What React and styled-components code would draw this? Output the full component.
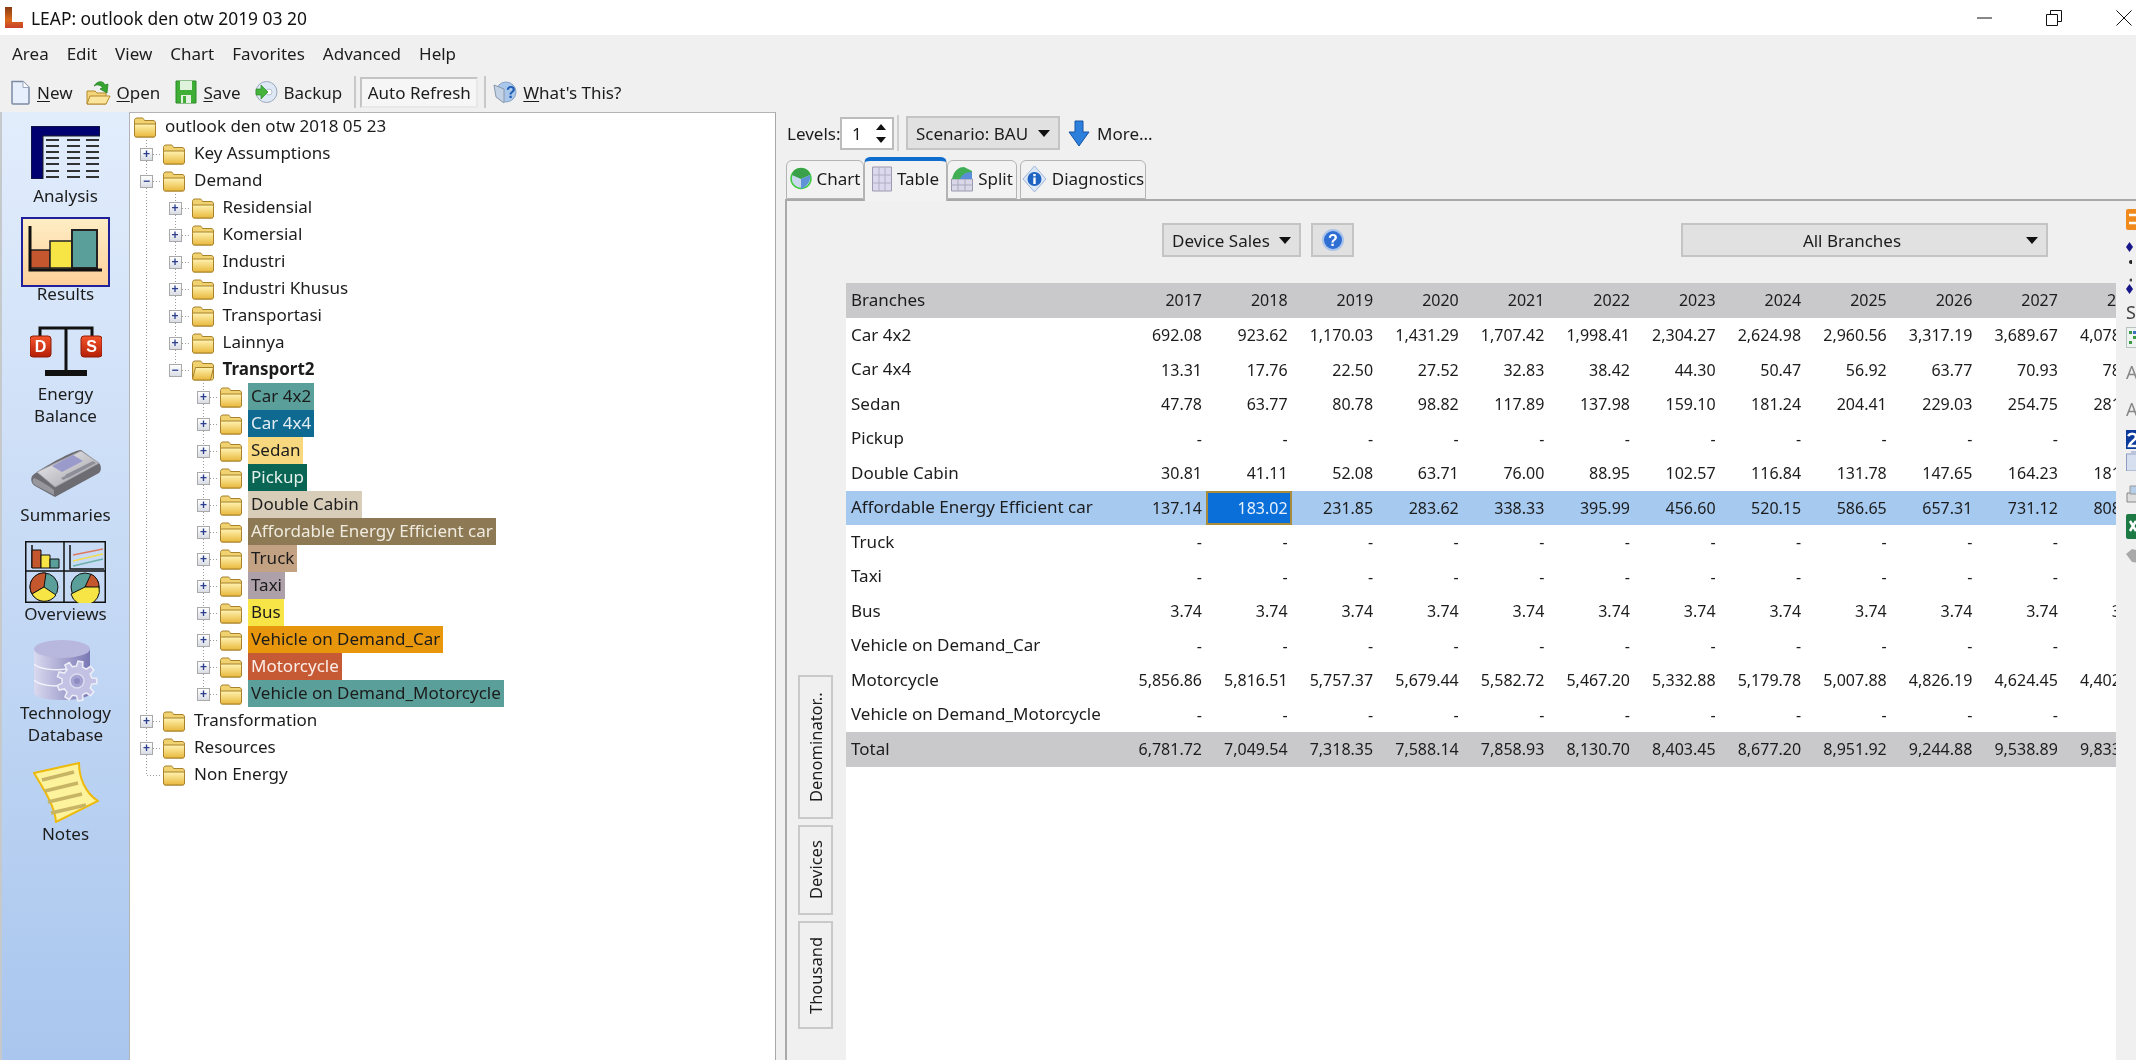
import React from "react";
import styled, { createGlobalStyle } from "styled-components";

const GlobalStyle = createGlobalStyle`
  html, body {
    margin: 0;
    padding: 0;
    background: #f0f0f0;
    overflow: hidden;
  }
  #root {
    width: 2136px;
    height: 1060px;
  }
`;

// Window chrome
const Page = styled.div`
  width: 2136px;
  height: 1060px;
  display: flex;
  flex-direction: column;
  overflow: hidden;
  background: #f0f0f0;
  color: #1c1c1c;
  font-family: "Noto Sans", "Open Sans", sans-serif;
  font-size: 17px;
  filter: blur(0.35px);
`;

const TitleBar = styled.header`
  height: 35px;
  flex: none;
  background: #fff;
  display: flex;
  align-items: center;
  padding-left: 5px;
`;

const TitleText = styled.span`
  margin-left: 8px;
  font-size: 17.4px;
  color: #111;
`;

const WindowButtons = styled.div`
  margin-left: auto;
  display: flex;
  align-items: center;
  gap: 54px;
  padding-right: 4px;
`;

const MenuBar = styled.nav`
  height: 37px;
  flex: none;
  display: flex;
  align-items: center;
  gap: 18px;
  padding-left: 12px;
`;

const MenuItem = styled.span`
  font-size: 17px;
`;

const ToolBar = styled.div`
  height: 40px;
  flex: none;
  display: flex;
  align-items: center;
  padding-left: 10px;
`;

const ToolButton = styled.span`
  display: flex;
  align-items: center;
  gap: 6px;
  margin-right: ${(p) => p.$mr}px;
  u {
    text-underline-offset: 2px;
  }
`;

const ToolSep = styled.span`
  width: 2px;
  height: 32px;
  background: #c8c8c8;
  margin-right: ${(p) => p.$mr}px;
`;

const AutoRefresh = styled.span`
  width: 118px;
  height: 31px;
  box-sizing: border-box;
  border: 2px solid #c4c4c4;
  border-bottom-color: #e8e8e8;
  border-right-color: #e8e8e8;
  background: #f6f6f6;
  display: flex;
  align-items: center;
  justify-content: center;
  margin-right: 6px;
  white-space: nowrap;
`;

const Main = styled.main`
  flex: 1;
  display: flex;
  min-height: 0;
`;

// Left icon rail
const Sidebar = styled.aside`
  width: 129px;
  flex: none;
  box-sizing: border-box;
  padding-top: 14px;
  background: linear-gradient(180deg, #e2edfc 0%, #a9c6ee 100%);
  border-left: 2px solid #c6c9cc;
  display: flex;
  flex-direction: column;
  align-items: center;
`;

const NavItem = styled.div`
  display: flex;
  flex-direction: column;
  align-items: center;
  margin-top: ${(p) => p.$mt || 0}px;
  width: 125px;
`;

const NavIcon = styled.div`
  height: ${(p) => p.$h}px;
  display: flex;
  align-items: center;
  justify-content: center;
  margin-bottom: ${(p) => p.$gap || 0}px;
`;

const ActiveBox = styled.div`
  width: 89px;
  height: 70px;
  box-sizing: border-box;
  border: 2px solid #20209a;
  background: linear-gradient(180deg, #ffedc4 0%, #fdd09a 100%);
  display: flex;
  align-items: center;
  justify-content: center;
  margin-bottom: -4px;
`;

const NavLabel = styled.div`
  line-height: 22px;
  font-size: 17px;
  text-align: center;
  position: relative;
`;

// Tree
const TreePanel = styled.section`
  width: 647px;
  flex: none;
  box-sizing: border-box;
  background: #fff;
  border-top: 1px solid #b4b4b4;
  border-left: 1px solid #b4b4b4;
  border-right: 1px solid #a8a8a8;
  padding-left: 3px;
`;

const TreeRow = styled.div`
  height: 27px;
  display: flex;
  align-items: center;
`;

const IndentCell = styled.span`
  width: 28.5px;
  height: 27px;
  flex: none;
  background: ${(p) =>
    p.$line
      ? "repeating-linear-gradient(180deg, #9a9a9a 0 1px, transparent 1px 3px) 13px 0 / 1px 100% no-repeat"
      : "none"};
`;

const ExpanderCell = styled.span`
  width: 29px;
  height: 27px;
  flex: none;
  display: flex;
  align-items: center;
  position: relative;
  &::before {
    content: "";
    position: absolute;
    left: 13px;
    top: 0;
    width: 1px;
    height: ${(p) => (p.$last ? "50%" : "100%")};
    background: repeating-linear-gradient(180deg, #9a9a9a 0 1px, transparent 1px 3px);
  }
  &::after {
    content: "";
    position: absolute;
    left: 14px;
    right: 2px;
    top: 14px;
    height: 1px;
    background: repeating-linear-gradient(90deg, #9a9a9a 0 1px, transparent 1px 3px);
  }
`;

const ExpandBox = styled.span`
  position: relative;
  z-index: 1;
  margin-left: 7px;
  margin-top: 1px;
  width: 13px;
  height: 13px;
  box-sizing: border-box;
  border: 1px solid #a9a9a9;
  background: linear-gradient(180deg, #fff, #d9dde4);
  display: flex;
  align-items: center;
  justify-content: center;
  color: #2c3f8e;
  font: 700 12px/1 "Liberation Sans", sans-serif;
`;

const TreeLabel = styled.span`
  margin-left: 5px;
  padding: 0 3px;
  height: 27px;
  line-height: 26px;
  white-space: nowrap;
  background: ${(p) => p.$bg || "transparent"};
  color: ${(p) => p.$fg || "#1c1c1c"};
  font-weight: ${(p) => (p.$bold ? 700 : 400)};
`;

// Right side
const RightPanel = styled.section`
  flex: 1;
  min-width: 0;
  display: flex;
  flex-direction: column;
  padding-left: 9px;
`;

const LevelsRow = styled.div`
  height: 45px;
  flex: none;
  display: flex;
  align-items: center;
  padding: 0 0 3px;
  box-sizing: border-box;
`;

const LevelsLabel = styled.span`
  margin-left: 2px;
  width: 53px;
`;

const SpinBox = styled.span`
  width: 54px;
  height: 33px;
  box-sizing: border-box;
  border: 2px solid #bcbcbc;
  background: #fff;
  display: flex;
  align-items: center;
  justify-content: space-between;
  padding: 0 6px 0 10px;
`;

const SpinArrows = styled.span`
  display: flex;
  flex-direction: column;
  gap: 7px;
`;

const RowSep = styled.span`
  width: 2px;
  height: 36px;
  margin: 0 7px 0 3px;
  background: #cfcfcf;
`;

const DropButton = styled.button`
  width: ${(p) => p.$w}px;
  height: 34px;
  box-sizing: border-box;
  border: 2px solid #c4c4c4;
  background: #e1e1e1;
  display: flex;
  align-items: center;
  justify-content: ${(p) => (p.$center ? "center" : "space-between")};
  padding: 0 8px;
  position: relative;
  font: inherit;
  color: inherit;
  white-space: nowrap;
`;

const Caret = styled.span`
  width: 0;
  height: 0;
  border-left: 6px solid transparent;
  border-right: 6px solid transparent;
  border-top: 7px solid #111;
`;

const SideCaret = styled(Caret)`
  position: absolute;
  right: 8px;
  top: 12px;
`;

const MoreLink = styled.span`
  display: flex;
  align-items: center;
  gap: 7px;
  margin-left: 8px;
`;

const TabStrip = styled.div`
  height: 42px;
  flex: none;
  display: flex;
  align-items: flex-end;
  padding-left: 1px;
  position: relative;
  z-index: 1;
`;

const Tab = styled.div`
  width: ${(p) => p.$w}px;
  height: ${(p) => (p.$active ? 44 : 39)}px;
  margin-left: ${(p) => p.$ml || 0}px;
  margin-bottom: ${(p) => (p.$active ? -2 : 0)}px;
  padding-bottom: ${(p) => (p.$active ? 5 : 2)}px;
  box-sizing: border-box;
  border: 1px solid #b4b4b4;
  border-bottom: ${(p) => (p.$active ? "none" : "1px solid #b4b4b4")};
  border-top: ${(p) => (p.$active ? "4px solid #0f6dce" : "1px solid #b4b4b4")};
  border-radius: 6px 6px 0 0;
  background: #f2f2f2;
  display: flex;
  align-items: center;
  justify-content: center;
  gap: 5px;
`;

const TabPanel = styled.div`
  flex: 1;
  min-height: 0;
  display: flex;
  border-top: 2px solid #a9a9a9;
  border-left: 2px solid #a9a9a9;
`;

const PanelBody = styled.div`
  width: 1329px;
  flex: none;
  display: flex;
  flex-direction: column;
`;

const FilterRow = styled.div`
  height: 82px;
  flex: none;
  box-sizing: border-box;
  padding: 22px 0 0 375px;
  display: flex;
  align-items: flex-start;
`;

const HelpButton = styled.span`
  width: 43px;
  height: 34px;
  box-sizing: border-box;
  margin-left: 10px;
  border: 2px solid #c4c4c4;
  background: #e1e1e1;
  display: flex;
  align-items: center;
  justify-content: center;
`;

const BranchSelect = styled(DropButton)`
  margin-left: 327px;
  padding-right: 33px;
`;

const TableArea = styled.div`
  flex: 1;
  min-height: 0;
  display: flex;
`;

const SideTabs = styled.div`
  width: 59px;
  flex: none;
  box-sizing: border-box;
  display: flex;
  flex-direction: column;
  justify-content: flex-end;
  padding: 0 0 31px 11px;
  gap: 6px;
`;

const SideTab = styled.div`
  width: 35px;
  height: ${(p) => p.$h}px;
  box-sizing: border-box;
  border: 2px solid #c9c9c9;
  writing-mode: vertical-rl;
  transform: rotate(180deg);
  display: flex;
  align-items: center;
  justify-content: center;
  font-size: 16.5px;
`;

const GridWrap = styled.div`
  flex: 1;
  min-width: 0;
  background: #fff;
`;

// the last year column runs off the panel in the real window, so it is cut at 54px
const GridRow = styled.div`
  display: grid;
  grid-template-columns: 274.4px repeat(11, 85.6px) 54px;
  height: ${(p) => (p.$head ? 35 : 34.5)}px;
  align-items: center;
  background: ${(p) => (p.$head ? "#c9c9cb" : p.$sel ? "#a6c9f0" : "#fff")};
`;

const NameCell = styled.div`
  padding-left: 5px;
  white-space: nowrap;
  margin-top: -2px;
`;

const NumCell = styled.div`
  text-align: right;
  padding-right: 4px;
  height: 100%;
  line-height: 34px;
  box-sizing: border-box;
  font-size: 16px;
  ${(p) =>
    p.$picked &&
    `
    background: #0a6fd8;
    color: #e8f2ff;
    border: 2px solid #a98b3e;
    padding-right: 2px;
    line-height: 30px;
  `}
`;

const CutCell = styled.div`
  height: 100%;
  line-height: 34px;
  font-size: 16px;
  overflow: hidden;
  white-space: nowrap;
`;

const CutValue = styled.span`
  display: inline-block;
  width: 85.6px;
  padding-right: 4px;
  box-sizing: border-box;
  text-align: right;
`;

const IconStrip = styled.div`
  width: 20px;
  flex: none;
  box-sizing: border-box;
  padding-left: 10px;
  overflow: hidden;
  display: flex;
  flex-direction: column;
  align-items: flex-start;
  white-space: nowrap;
`;

const StripIcon = styled.div`
  margin-top: ${(p) => p.$mt}px;
  height: ${(p) => p.$h}px;
  line-height: ${(p) => p.$h}px;
  color: ${(p) => p.$fg || "#444"};
  font-size: 18px;
`;

// Icons
const Folder = ({ open }) => (
  <svg width="24" height="22" viewBox="0 0 24 22">
    <defs>
      <linearGradient id="folderFill" x1="0" y1="0" x2="0" y2="1">
        <stop offset="0" stopColor="#fff3b2" />
        <stop offset="1" stopColor="#e9b83c" />
      </linearGradient>
    </defs>
    <path d="M1.5 19V4.5C1.5 3 2.5 2 4 2h5c1 0 1.6.6 2 1.5l.5 1H20c1.5 0 2.5 1 2.5 2.5V19c0 1.2-.8 2-2 2h-17c-1.2 0-2-.8-2-2z" fill="#f1d271" stroke="#a8812b" />
    {open ? (
      <path d="M1.5 20l3-11.5h18l-3 12.5H3z" fill="url(#folderFill)" stroke="#a8812b" />
    ) : (
      <path d="M1.5 19V9.5C1.5 8.5 2.3 8 3 8h18c1 0 1.5.7 1.5 1.5V19c0 1.2-.8 2-2 2h-17c-1.2 0-2-.8-2-2z" fill="url(#folderFill)" stroke="#a8812b" />
    )}
  </svg>
);

const LeapLogo = () => (
  <svg width="18" height="21" viewBox="0 0 18 21">
    <defs>
      <linearGradient id="leapFill" x1="0" y1="0" x2="0" y2="1">
        <stop offset="0" stopColor="#8a3b12" />
        <stop offset=".6" stopColor="#d9691a" />
        <stop offset="1" stopColor="#c8402a" />
      </linearGradient>
    </defs>
    <path d="M0 0h7v15h11v6H0z" fill="url(#leapFill)" />
  </svg>
);

const NewDocIcon = () => (
  <svg width="21" height="25" viewBox="0 0 21 25">
    <path d="M2 1.5h11l6 6V23a1 1 0 0 1-1 1H3a1 1 0 0 1-1-1z" fill="#e6effb" stroke="#7d8aa5" strokeWidth="1.5" />
    <path d="M13 1.5V7.5h6" fill="#fff" stroke="#9aa6bd" />
  </svg>
);

const OpenIcon = () => (
  <svg width="25" height="27" viewBox="0 0 25 27">
    <path d="M1 25V12h8l2 2h9v11z" fill="#f4d47a" stroke="#b48a2b" />
    <path d="M1 25l3-8h20l-4 8z" fill="#fbe59c" stroke="#b48a2b" />
    <path d="M8 7c3-5 9-6 11-1l3-1-1 9-7-4 2.5-1.5C15 6 11 5 8 7z" fill="#35a52f" stroke="#1f7a1d" strokeWidth=".7" />
  </svg>
);

const SaveIcon = () => (
  <svg width="22" height="24" viewBox="0 0 22 24">
    <path d="M1 1h20v22H1z" fill="#3eae35" stroke="#2a8a26" />
    <path d="M5 1h12v9H5z" fill="#dff3dc" />
    <path d="M6 15h10v8H6z" fill="#e4efe2" />
    <path d="M8 16h3v7H8z" fill="#3eae35" />
  </svg>
);

const BackupIcon = () => (
  <svg width="23" height="24" viewBox="0 0 23 24">
    <circle cx="11.5" cy="12" r="10.5" fill="#dfe9f5" stroke="#9aa8bc" />
    <circle cx="14" cy="12" r="3" fill="#fff" stroke="#b5bfcc" />
    <path d="M1 9h5V5l7 7-7 7v-4H1z" fill="#46b43a" stroke="#2b8a28" strokeWidth=".7" />
  </svg>
);

const WhatsThisIcon = () => (
  <svg width="24" height="26" viewBox="0 0 24 26">
    <circle cx="13" cy="13" r="10" fill="#a9c7ea" stroke="#8ba3c4" />
    <path d="M1 6l10 4v14L3 18z" fill="#c3d2e4" stroke="#8a98ac" />
    <text x="13" y="19" fontFamily="Liberation Sans" fontWeight="700" fontSize="16" fill="#1d5db5">?</text>
  </svg>
);

const HelpIcon = () => (
  <svg width="22" height="24" viewBox="0 0 22 24">
    <circle cx="11" cy="12" r="10" fill="#2f6ed3" stroke="#aac4ea" strokeWidth="2" />
    <text x="11" y="18" textAnchor="middle" fontFamily="Liberation Sans" fontWeight="700" fontSize="16" fill="#fff">?</text>
  </svg>
);

const DownArrow = () => (
  <svg width="22" height="27" viewBox="0 0 22 27">
    <path d="M7 1h8v11h6L11 26 1 12h6z" fill="#2d7fdc" stroke="#1655a8" />
  </svg>
);

const PieTabIcon = () => (
  <svg width="22" height="25" viewBox="0 0 22 25">
    <circle cx="11" cy="12.5" r="10" fill="#c9d8ee" stroke="#3fcb3f" strokeWidth="1.5" />
    <path d="M2 9c1-5 5-7 9-7s8 2 9 7l-9 4z" fill="#3aa04a" />
    <path d="M11 13l9-4c1 5-2 11-9 14z" fill="#5f93d8" />
  </svg>
);

const GridTabIcon = () => (
  <svg width="20" height="28" viewBox="0 0 20 28">
    <path d="M.5 2h19v24H.5z" fill="#dcd8ee" stroke="#9c9aae" />
    <path d="M7 2v24M13 2v24M.5 10h19M.5 18h19" stroke="#b2afc2" />
  </svg>
);

const SplitTabIcon = () => (
  <svg width="22" height="26" viewBox="0 0 22 26">
    <path d="M.5 13h21v12H.5z" fill="#d8d8e8" stroke="#9c9aae" />
    <path d="M7 13v12M14 13v12M.5 19h21" stroke="#a9a9bc" />
    <path d="M1 13C3 4 8 1 13 1l8 4v8z" fill="#3fae55" />
    <path d="M9 13c2-4 5-7 12-7v7z" fill="#5a8fd8" />
  </svg>
);

const InfoTabIcon = () => (
  <svg width="25" height="28" viewBox="0 0 25 28">
    <path d="M12.5 1L24 14 12.5 27 1 14z" fill="#dbe7f6" stroke="#9eb5d6" />
    <circle cx="12.5" cy="14" r="7" fill="#1f63c3" />
    <path d="M11.3 12.5h2.4V19h-2.4zM11.3 9h2.4v2.2h-2.4z" fill="#fff" />
  </svg>
);

const AnalysisIcon = () => (
  <svg width="69" height="53" viewBox="0 0 69 53">
    <path d="M0 0h69v10H12v43H0z" fill="#000070" stroke="#222" />
    {[14, 20, 26, 32, 38, 45, 51].map((y) => (
      <path key={y} d="M15 0h13M36 0h13M55 0h13" transform={`translate(0 ${y})`} stroke="#333" strokeWidth="1.8" />
    ))}
  </svg>
);

const ResultsIcon = () => (
  <svg width="76" height="52" viewBox="0 0 76 52">
    <path d="M2 42h20V24H2z" fill="#c5572f" stroke="#222" strokeWidth="1.5" />
    <path d="M22 42h22V15H22z" fill="#f6e545" stroke="#222" strokeWidth="1.5" />
    <path d="M44 42h25V4H44z" fill="#5a9f99" stroke="#222" strokeWidth="2" />
    <path d="M2 0v44h72" fill="none" stroke="#111" strokeWidth="3" />
  </svg>
);

const BalanceIcon = () => (
  <svg width="72" height="50" viewBox="0 0 72 50">
    <defs>
      <linearGradient id="blockFill" x1="0" y1="0" x2="0" y2="1">
        <stop offset="0" stopColor="#f4552a" />
        <stop offset="1" stopColor="#b51f08" />
      </linearGradient>
    </defs>
    <path d="M10 12V2h52v10M36 2v44" fill="none" stroke="#111" strokeWidth="3" />
    <path d="M15 44h42v6H15z" fill="#111" />
    <rect x="0" y="10" width="21" height="21" rx="3" fill="url(#blockFill)" stroke="#8f1c08" />
    <rect x="51" y="10" width="21" height="21" rx="3" fill="url(#blockFill)" stroke="#8f1c08" />
    <text x="10.5" y="26" textAnchor="middle" fontFamily="Liberation Sans" fontWeight="700" fontSize="16" fill="#fff">D</text>
    <text x="61.5" y="26" textAnchor="middle" fontFamily="Liberation Sans" fontWeight="700" fontSize="16" fill="#fff">S</text>
  </svg>
);

const SummariesIcon = () => (
  <svg width="70" height="48" viewBox="0 0 70 48">
    <defs>
      <linearGradient id="paperFill" x1="0" y1="0" x2="1" y2="1">
        <stop offset="0" stopColor="#f4f4f6" />
        <stop offset="1" stopColor="#9a9aa2" />
      </linearGradient>
    </defs>
    <path d="M2 26c-3 3-2 9 2 11l20 11 44-24c3-3 2-8 0-10L50 1C45 0 12 18 2 26z" fill="#6c6c72" />
    <path d="M6 23L50 2l18 12-44 24z" fill="url(#paperFill)" stroke="#a4a4aa" />
    <path d="M21 17L42 6l10 6-21 11z" fill="#9a9acb" />
    <path d="M34 26l28-14 3 2-28 15zM30 29l12-6 2 2-12 6z" fill="#8e8e98" />
    <path d="M3 29c4 1 15 8 20 12v5L4 36c-3-2-3-5-1-7z" fill="#96969c" />
  </svg>
);

const OverviewsIcon = () => (
  <svg width="81" height="62" viewBox="0 0 81 62">
    <rect x=".75" y=".75" width="79.5" height="60.5" fill="none" stroke="#111" strokeWidth="1.5" />
    <path d="M39 0v62M0 30h81" stroke="#111" strokeWidth="1.5" />
    <path d="M7 27V4" stroke="#111" strokeWidth="1.5" />
    <path d="M7 9h9v18H7z" fill="#c5572f" stroke="#111" />
    <path d="M16 14h9v13h-9z" fill="#f6e545" stroke="#111" />
    <path d="M25 18h9v9h-9z" fill="#5a9f99" stroke="#111" />
    <path d="M45 4v24h34" fill="none" stroke="#111" strokeWidth="1.5" />
    <path d="M48 14l30-6" stroke="#dc7a60" strokeWidth="1.5" />
    <path d="M48 20l30-7" stroke="#f0dc50" strokeWidth="1.5" />
    <path d="M48 25l30-7" stroke="#6dafa9" strokeWidth="1.5" />
    <circle cx="19" cy="46" r="14" fill="#5a9f99" stroke="#111" />
    <path d="M19 46L21 32A14 14 0 0 0 5 46 14 14 0 0 0 7 53z" fill="#c5572f" stroke="#111" />
    <path d="M19 46L7 53A14 14 0 0 0 31 54z" fill="#f6e545" stroke="#111" />
    <circle cx="60" cy="46" r="14" fill="#5a9f99" stroke="#111" />
    <path d="M60 46L66 33A14 14 0 0 1 74 47z" fill="#c5572f" stroke="#111" />
    <path d="M60 46H74A14 14 0 0 1 46 53z" fill="#f6e545" stroke="#111" />
  </svg>
);

// gear outline around (cx, cy), built from its teeth
function gearPath(cx, cy, outer, inner, teeth) {
  const pts = [];
  for (let i = 0; i < teeth; i++) {
    const step = (Math.PI * 2) / teeth;
    const a = i * step;
    [[-0.3, inner], [-0.18, outer], [0.18, outer], [0.3, inner]].forEach(([f, r]) => {
      const t = a + f * step;
      pts.push(`${(cx + r * Math.cos(t)).toFixed(1)} ${(cy + r * Math.sin(t)).toFixed(1)}`);
    });
  }
  return `M${pts.join("L")}z`;
}

const DatabaseIcon = () => (
  <svg width="64" height="62" viewBox="0 0 64 62">
    <defs>
      <linearGradient id="dbFill" x1="0" y1="0" x2="1" y2="0">
        <stop offset="0" stopColor="#d9d9f0" />
        <stop offset="1" stopColor="#7a78b4" />
      </linearGradient>
    </defs>
    <path d="M0 9v44c0 4 12 7 28 7s28-3 28-7V9z" fill="url(#dbFill)" />
    <ellipse cx="28" cy="9" rx="28" ry="9" fill="#b8b7de" />
    <path d="M0 24c5 5 20 7 34 5M0 40c5 5 16 6 24 6" fill="none" stroke="#f2f2fb" strokeWidth="1.5" />
    <path d={gearPath(43, 41, 20, 15, 9)} fill="#c3c2e4" stroke="#eeeef9" strokeWidth="1.5" />
    <circle cx="43" cy="41" r="7" fill="#a5a4d2" stroke="#dcdcf0" strokeWidth="1.5" />
    <circle cx="43" cy="41" r="3" fill="#8e8cc0" />
  </svg>
);

const NotesIcon = () => (
  <svg width="66" height="61" viewBox="0 0 66 61">
    <path d="M1 11L46 1c0 14 6 30 19 38L23 60C22 44 10 26 1 11z" fill="#fdf39c" stroke="#edb90c" strokeWidth="2" />
    {[0, 1, 2, 3].map((i) => (
      <path key={i} d={`M${9 + i * 3} ${18 + i * 11}l${32 + i} -8`} stroke="#c7b464" strokeWidth="3.5" />
    ))}
  </svg>
);

const TREE = [
  { level: -1, text: "outlook den otw 2018 05 23" },
  { level: 0, text: "Key Assumptions", box: "+" },
  { level: 0, text: "Demand", box: "−" },
  { level: 1, text: "Residensial", box: "+" },
  { level: 1, text: "Komersial", box: "+" },
  { level: 1, text: "Industri", box: "+" },
  { level: 1, text: "Industri Khusus", box: "+" },
  { level: 1, text: "Transportasi", box: "+" },
  { level: 1, text: "Lainnya", box: "+" },
  { level: 1, text: "Transport2", box: "−", bold: true, open: true, last: true },
  { level: 2, text: "Car 4x2", box: "+", bg: "#5a9f99" },
  { level: 2, text: "Car 4x4", box: "+", bg: "#0f6a92", fg: "#e4eef2" },
  { level: 2, text: "Sedan", box: "+", bg: "#f7d87e" },
  { level: 2, text: "Pickup", box: "+", bg: "#0a6654", fg: "#e4f0ec" },
  { level: 2, text: "Double Cabin", box: "+", bg: "#d8cdb9" },
  { level: 2, text: "Affordable Energy Efficient car", box: "+", bg: "#8d7a54", fg: "#f0ebe0" },
  { level: 2, text: "Truck", box: "+", bg: "#c3a283" },
  { level: 2, text: "Taxi", box: "+", bg: "#aea0a9" },
  { level: 2, text: "Bus", box: "+", bg: "#f7e548" },
  { level: 2, text: "Vehicle on Demand_Car", box: "+", bg: "#e8960b" },
  { level: 2, text: "Motorcycle", box: "+", bg: "#c65a35", fg: "#fbeee8" },
  { level: 2, text: "Vehicle on Demand_Motorcycle", box: "+", bg: "#5a9f99", last: true },
  { level: 0, text: "Transformation", box: "+" },
  { level: 0, text: "Resources", box: "+" },
  { level: 0, text: "Non Energy", last: true },
];

const YEARS = ["2017", "2018", "2019", "2020", "2021", "2022", "2023", "2024", "2025", "2026", "2027", "2028"];
const DASHES = Array(12).fill("-");

const ROWS = [
  ["Car 4x2", ["692.08", "923.62", "1,170.03", "1,431.29", "1,707.42", "1,998.41", "2,304.27", "2,624.98", "2,960.56", "3,317.19", "3,689.67", "4,078.25"]],
  ["Car 4x4", ["13.31", "17.76", "22.50", "27.52", "32.83", "38.42", "44.30", "50.47", "56.92", "63.77", "70.93", "78.42"]],
  ["Sedan", ["47.78", "63.77", "80.78", "98.82", "117.89", "137.98", "159.10", "181.24", "204.41", "229.03", "254.75", "281.65"]],
  ["Pickup", DASHES],
  ["Double Cabin", ["30.81", "41.11", "52.08", "63.71", "76.00", "88.95", "102.57", "116.84", "131.78", "147.65", "164.23", "181.57"]],
  ["Affordable Energy Efficient car", ["137.14", "183.02", "231.85", "283.62", "338.33", "395.99", "456.60", "520.15", "586.65", "657.31", "731.12", "808.31"], true],
  ["Truck", DASHES],
  ["Taxi", DASHES],
  ["Bus", Array(12).fill("3.74")],
  ["Vehicle on Demand_Car", DASHES],
  ["Motorcycle", ["5,856.86", "5,816.51", "5,757.37", "5,679.44", "5,582.72", "5,467.20", "5,332.88", "5,179.78", "5,007.88", "4,826.19", "4,624.45", "4,402.63"]],
  ["Vehicle on Demand_Motorcycle", DASHES],
];

const TOTALS = ["6,781.72", "7,049.54", "7,318.35", "7,588.14", "7,858.93", "8,130.70", "8,403.45", "8,677.20", "8,951.92", "9,244.88", "9,538.89", "9,833.00"];

function TreeNode({ node }) {
  const { level } = node;
  return (
    <TreeRow>
      {level >= 1 && <IndentCell $line />}
      {level >= 2 && <IndentCell />}
      {level >= 0 && (
        <ExpanderCell $last={node.last}>
          {node.box && <ExpandBox>{node.box}</ExpandBox>}
        </ExpanderCell>
      )}
      <Folder open={node.open} />
      <TreeLabel $bg={node.bg} $fg={node.fg} $bold={node.bold}>
        {node.text}
      </TreeLabel>
    </TreeRow>
  );
}

function ValueCells({ values, pickedIndex }) {
  return values.map((v, i) =>
    i === values.length - 1 ? (
      <CutCell key={i}>
        <CutValue>{v}</CutValue>
      </CutCell>
    ) : (
      <NumCell key={i} $picked={i === pickedIndex}>
        {v}
      </NumCell>
    )
  );
}

export default function App() {
  return (
    <Page>
      <GlobalStyle />
      <TitleBar>
        <LeapLogo />
        <TitleText>LEAP: outlook den otw 2019 03 20</TitleText>
        <WindowButtons>
          <svg width="15" height="16" viewBox="0 0 15 16">
            <path d="M0 8h15" stroke="#111" />
          </svg>
          <svg width="16" height="16" viewBox="0 0 16 16">
            <path d="M.5 4.5h11v11H.5zM4.5 4.5V.5h11v11h-4" fill="none" stroke="#111" />
          </svg>
          <svg width="16" height="16" viewBox="0 0 16 16">
            <path d="M.5.5l15 15M15.5.5l-15 15" stroke="#111" />
          </svg>
        </WindowButtons>
      </TitleBar>

      <MenuBar>
        {["Area", "Edit", "View", "Chart", "Favorites", "Advanced", "Help"].map((m) => (
          <MenuItem key={m}>{m}</MenuItem>
        ))}
      </MenuBar>

      <ToolBar>
        <ToolButton $mr={13}>
          <NewDocIcon />
          <span><u>N</u>ew</span>
        </ToolButton>
        <ToolButton $mr={15}>
          <OpenIcon />
          <span><u>O</u>pen</span>
        </ToolButton>
        <ToolButton $mr={14}>
          <SaveIcon />
          <span><u>S</u>ave</span>
        </ToolButton>
        <ToolButton $mr={12}>
          <BackupIcon />
          <span>Backup</span>
        </ToolButton>
        <ToolSep $mr={4} />
        <AutoRefresh>Auto Refresh</AutoRefresh>
        <ToolSep $mr={7} />
        <ToolButton $mr={0}>
          <WhatsThisIcon />
          <span><u>W</u>hat's This?</span>
        </ToolButton>
      </ToolBar>

      <Main>
        <Sidebar>
          <NavItem>
            <NavIcon $h={53} $gap={6}><AnalysisIcon /></NavIcon>
            <NavLabel>Analysis</NavLabel>
          </NavItem>
          <NavItem $mt={10}>
            <ActiveBox><ResultsIcon /></ActiveBox>
            <NavLabel>Results</NavLabel>
          </NavItem>
          <NavItem $mt={21}>
            <NavIcon $h={50} $gap={7}><BalanceIcon /></NavIcon>
            <NavLabel>Energy<br />Balance</NavLabel>
          </NavItem>
          <NavItem $mt={22}>
            <NavIcon $h={48} $gap={7}><SummariesIcon /></NavIcon>
            <NavLabel>Summaries</NavLabel>
          </NavItem>
          <NavItem $mt={15}>
            <NavIcon $h={62}><OverviewsIcon /></NavIcon>
            <NavLabel>Overviews</NavLabel>
          </NavItem>
          <NavItem $mt={15}>
            <NavIcon $h={62}><DatabaseIcon /></NavIcon>
            <NavLabel>Technology<br />Database</NavLabel>
          </NavItem>
          <NavItem $mt={16}>
            <NavIcon $h={61}><NotesIcon /></NavIcon>
            <NavLabel>Notes</NavLabel>
          </NavItem>
        </Sidebar>

        <TreePanel>
          {TREE.map((node) => (
            <TreeNode key={node.text} node={node} />
          ))}
        </TreePanel>

        <RightPanel>
          <LevelsRow>
            <LevelsLabel>Levels:</LevelsLabel>
            <SpinBox>
              1
              <SpinArrows>
                <svg width="10" height="6" viewBox="0 0 10 6"><path d="M5 0l5 6H0z" fill="#111" /></svg>
                <svg width="10" height="6" viewBox="0 0 10 6"><path d="M5 6L0 0h10z" fill="#111" /></svg>
              </SpinArrows>
            </SpinBox>
            <RowSep />
            <DropButton $w={154}>
              Scenario: BAU
              <Caret />
            </DropButton>
            <MoreLink>
              <DownArrow />
              More...
            </MoreLink>
          </LevelsRow>

          <TabStrip>
            <Tab $w={78}><PieTabIcon />Chart</Tab>
            <Tab $w={83} $active><GridTabIcon />Table</Tab>
            <Tab $w={70}><SplitTabIcon />Split</Tab>
            <Tab $w={126} $ml={3}><InfoTabIcon />Diagnostics</Tab>
          </TabStrip>

          <TabPanel>
            <PanelBody>
              <FilterRow>
                <DropButton $w={139}>
                  Device Sales
                  <Caret />
                </DropButton>
                <HelpButton><HelpIcon /></HelpButton>
                <BranchSelect $w={367} $center>
                  All Branches
                  <SideCaret />
                </BranchSelect>
              </FilterRow>
              <TableArea>
                <SideTabs>
                  <SideTab $h={144}>Denominator..</SideTab>
                  <SideTab $h={90}>Devices</SideTab>
                  <SideTab $h={108}>Thousand</SideTab>
                </SideTabs>
                <GridWrap>
                  <GridRow $head>
                    <NameCell>Branches</NameCell>
                    <ValueCells values={YEARS} />
                  </GridRow>
                  {ROWS.map(([name, values, sel]) => (
                    <GridRow key={name} $sel={sel}>
                      <NameCell>{name}</NameCell>
                      <ValueCells values={values} pickedIndex={sel ? 1 : -1} />
                    </GridRow>
                  ))}
                  <GridRow $head>
                    <NameCell>Total</NameCell>
                    <ValueCells values={TOTALS} />
                  </GridRow>
                </GridWrap>
              </TableArea>
            </PanelBody>

            <IconStrip>
              <StripIcon $mt={8} $h={21}>
                <svg width="14" height="21" viewBox="0 0 14 21"><rect width="14" height="21" rx="2" fill="#f08a1c" /><path d="M3 6h11M3 14h11" stroke="#fff" strokeWidth="2.5" /></svg>
              </StripIcon>
              <StripIcon $mt={10} $h={10}>
                <svg width="7" height="10" viewBox="0 0 7 10"><path d="M3.5 0L7 5 3.5 10 0 5z" fill="#16168a" /></svg>
              </StripIcon>
              <StripIcon $mt={4} $h={8}>
                <svg width="6" height="8" viewBox="0 0 6 8"><circle cx="5" cy="5" r="2" fill="#222" /></svg>
              </StripIcon>
              <StripIcon $mt={10} $h={8}>
                <svg width="6" height="8" viewBox="0 0 6 8"><circle cx="5" cy="5" r="1.5" fill="#444" /></svg>
              </StripIcon>
              <StripIcon $mt={2} $h={10}>
                <svg width="7" height="10" viewBox="0 0 7 10"><path d="M3.5 0L7 5 3.5 10 0 5z" fill="#16168a" /></svg>
              </StripIcon>
              <StripIcon $mt={8} $h={24}>S</StripIcon>
              <StripIcon $mt={3} $h={21}>
                <svg width="14" height="21" viewBox="0 0 14 21"><rect x=".5" y=".5" width="16" height="20" fill="#eef3f2" stroke="#b5c2c0" /><path d="M3 4h3v3H3zM7 9h3v3H7zM3 14h3v3H3z" fill="#3b9c45" /><path d="M7 4h3v3H7z" fill="#3a6fc4" /></svg>
              </StripIcon>
              <StripIcon $mt={13} $h={22} $fg="#888">A</StripIcon>
              <StripIcon $mt={15} $h={22} $fg="#888">A</StripIcon>
              <StripIcon $mt={10} $h={19}>
                <svg width="14" height="19" viewBox="0 0 14 19"><rect width="14" height="19" fill="#0c3a9c" /><path d="M2 6c2-3 8-3 8 1 0 3-6 5-7 9h10" fill="none" stroke="#fff" strokeWidth="2.5" /></svg>
              </StripIcon>
              <StripIcon $mt={1} $h={21}>
                <svg width="14" height="21" viewBox="0 0 14 21"><rect x=".5" y="4" width="16" height="17" fill="#d6dff0" stroke="#8f9dc0" /><path d="M5 1h9v4H5z" fill="#b9c4dc" /></svg>
              </StripIcon>
              <StripIcon $mt={12} $h={21}>
                <svg width="14" height="21" viewBox="0 0 14 21"><path d="M1 10h16v9H1z" fill="#ddd" stroke="#888" /><path d="M4 3h12v8H4z" fill="#b6cfe8" stroke="#999" /></svg>
              </StripIcon>
              <StripIcon $mt={10} $h={25}>
                <svg width="14" height="25" viewBox="0 0 14 25"><rect width="16" height="25" rx="2" fill="#1d7a45" /><path d="M4 7l6 10M10 7l-6 10" stroke="#fff" strokeWidth="2.5" /></svg>
              </StripIcon>
              <StripIcon $mt={9} $h={16}>
                <svg width="14" height="16" viewBox="0 0 14 16"><path d="M0 6l6-5 8 2v12l-8-1z" fill="#a9a9a9" /></svg>
              </StripIcon>
            </IconStrip>
          </TabPanel>
        </RightPanel>
      </Main>
    </Page>
  );
}
